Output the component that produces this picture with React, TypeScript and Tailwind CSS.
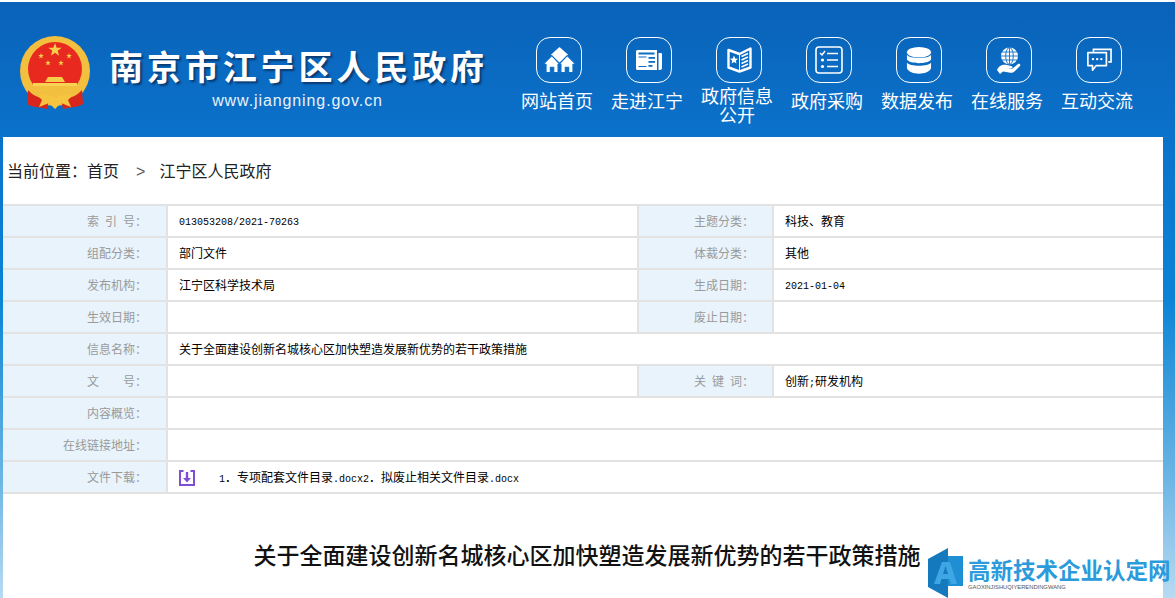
const navItems = [
  { label: "网站首页", icon: <HomeIcon />, labelClass: "mt-[10px]" },
  { label: "走进江宁", icon: <NewsIcon />, labelClass: "mt-[10px]" },
  { label: "政府信息公开", icon: <BookIcon />, labelClass: "mt-[5px]" },
  { label: "政府采购", icon: <ListIcon />, labelClass: "mt-[10px]" },
  { label: "数据发布", icon: <DbIcon />, labelClass: "mt-[10px]" },
  { label: "在线服务", icon: <GlobeIcon />, labelClass: "mt-[10px]" },
  { label: "互动交流", icon: <ChatIcon />, labelClass: "mt-[10px]" },
];

function HomeIcon() {
  return (
    <svg width="33" height="26" viewBox="0 0 34 27" fill="white">
      <path d="M17 0 L26 8 L17 16 L8 8 Z" />
      <g stroke="#0b6fc8" strokeWidth="1.2" strokeLinejoin="round">
        <path d="M9 9 L17.5 18 L15.5 18 L15.5 26.5 L11 26.5 L11 21 L7.5 21 L7.5 26.5 L3 26.5 L3 18 L0 18 Z" />
        <path d="M25 9 L34 18 L31 18 L31 26.5 L26.5 26.5 L26.5 21 L23 21 L23 26.5 L18.5 26.5 L18.5 18 L16.5 18 Z" />
      </g>
    </svg>
  );
}

function NewsIcon() {
  return (
    <svg width="26" height="20" viewBox="0 0 26 20">
      <path d="M0 1.5 A1.5 1.5 0 0 1 1.5 0 H21 V20 H1.5 A1.5 1.5 0 0 1 0 18.5 Z" fill="white" />
      <path d="M22.5 3 H25 A1 1 0 0 1 26 4 V18 A2 2 0 0 1 24 20 H22.5 Z" fill="white" />
      <rect x="2.5" y="2.5" width="16" height="2" fill="#0b6fc8" />
      <rect x="12.5" y="7" width="6.5" height="1.8" fill="#0b6fc8" />
      <rect x="12.5" y="11" width="6.5" height="1.8" fill="#0b6fc8" />
      <rect x="12.5" y="15" width="4" height="1.8" fill="#0b6fc8" />
      <path d="M2.5 6.5 H10.5 V7.5 H2.5 Z M2.5 16 H10.5 V17 H2.5 Z" fill="#0b6fc8" />
    </svg>
  );
}

function BookIcon() {
  return (
    <svg width="25" height="26" viewBox="0 0 25 26">
      <path d="M1.5 3 L12.5 7 L23.5 1.5 V20.5 L12.5 24.5 L1.5 20.5 Z" fill="none" stroke="white" strokeWidth="2.4" strokeLinejoin="round" />
      <path d="M12.5 7 V24" stroke="white" strokeWidth="1" />
      <path d="M7 8.5 L8.2 11.4 L11 11.7 L8.8 13.7 L9.5 16.5 L7 15 L4.5 16.5 L5.2 13.7 L3 11.7 L5.8 11.4 Z" fill="white" />
      <path d="M14.5 9.5 L21 6.5 M14.5 13 L21 10 M14.5 16.5 L21 13.5 M14.5 20 L21 17" stroke="white" strokeWidth="1.7" />
    </svg>
  );
}

function ListIcon() {
  return (
    <svg width="28" height="28" viewBox="0 0 28 28" fill="none" stroke="white">
      <rect x="1" y="1" width="26" height="26" rx="3" strokeWidth="1.6" />
      <path d="M5 7 L7 9 L10 5" strokeWidth="1.4" />
      <path d="M12 7.5 H23 M12 14 H23 M12 20.5 H23" strokeWidth="1.6" />
      <circle cx="7.5" cy="14" r="1.6" fill="white" stroke="none" />
      <circle cx="7.5" cy="20.5" r="1.6" fill="white" stroke="none" />
    </svg>
  );
}

function DbIcon() {
  return (
    <svg width="26" height="27" viewBox="0 0 26 28" fill="white">
      <ellipse cx="13" cy="5.5" rx="12.5" ry="5.5" />
      <path d="M0.5 8 C3 12.5 23 12.5 25.5 8 V13 C23 18 3 18 0.5 13 Z" />
      <path d="M0.5 16 C3 20.5 23 20.5 25.5 16 V22 C23 29.5 3 29.5 0.5 22 Z" />
    </svg>
  );
}

function GlobeIcon() {
  return (
    <svg width="24" height="27" viewBox="0 0 24 27">
      <circle cx="12.5" cy="9" r="8.5" fill="white" />
      <g stroke="#0b6fc8" strokeWidth="0.9" fill="none">
        <ellipse cx="12.5" cy="9" rx="3.8" ry="8.5" />
        <path d="M12.5 0.5 V17.5 M5 5 H20 M4 9 H21 M5 13 H20" />
      </g>
      <path d="M0 23 C2 18 6 17 10 18 L14 19 C16 19.5 16 21.5 14 21.5 L10 21.5 L15 22 L21 17 C22.5 16 24 17.5 23 19 L18 24 C16 26 14 26 12 25.5 L6 24.5 L3 27 Z" fill="white" />
    </svg>
  );
}

function ChatIcon() {
  return (
    <svg width="26" height="25" viewBox="0 0 28 27" fill="none" stroke="white" strokeWidth="1.8">
      <path d="M8 4 V1.5 H27 V15 H24" />
      <path d="M2 5 H22 V19 H11 L7 24 V19 H2 Z" strokeLinejoin="round" />
      <g fill="white" stroke="none">
        <circle cx="7.5" cy="12" r="1.3" />
        <circle cx="12" cy="12" r="1.3" />
        <circle cx="16.5" cy="12" r="1.3" />
      </g>
    </svg>
  );
}

function Star({ x, y, r }: { x: number; y: number; r: number }) {
  const pts = Array.from({ length: 10 }, (_, i) => {
    const a = -Math.PI / 2 + (i * Math.PI) / 5;
    const d = i % 2 === 0 ? r : r * 0.4;
    return `${x + d * Math.cos(a)},${y + d * Math.sin(a)}`;
  }).join(" ");
  return <polygon points={pts} fill="#f6cf4a" />;
}

function Emblem() {
  return (
    <svg width="72" height="76" viewBox="0 0 72 76">
      <circle cx="36" cy="35" r="35" fill="#f2bf3f" />
      <circle cx="36" cy="33" r="27" fill="#e8291f" />
      <Star x={36} y={14} r={7} />
      <Star x={22} y={20} r={3} />
      <Star x={50} y={20} r={3} />
      <Star x={29} y={27} r={3} />
      <Star x={42} y={27} r={3} />
      <path d="M29 41 H43 L46 46 H26 Z" fill="#f6cf4a" />
      <path d="M14 47 H58 V53 H14 Z" fill="#f8d253" />
      <path d="M10 53 C20 64 52 64 62 53 L60 50 H12 Z" fill="#f2bf3f" />
      <path d="M9 54 C14 60 22 63 30 63 L28 73 C22 71 14 72 8 68 Z" fill="#d9261c" />
      <path d="M63 54 C58 60 50 63 42 63 L44 73 C50 71 58 72 64 68 Z" fill="#d9261c" />
      <path d="M19 60 C25 58 31 58 36 62 C41 58 47 58 53 60 L49 64 L52 71 L42 67 L36 73 L30 67 L20 71 L23 64 Z" fill="#f6c53f" />
    </svg>
  );
}

function DownloadIcon() {
  return (
    <svg width="16" height="16" viewBox="0 0 16 16" fill="none" stroke="#7d4fd8">
      <path d="M4.5 1 H1 V15 H15 V1 H11.5" strokeWidth="2" />
      <path d="M8 2 V10" strokeWidth="2.4" />
      <path d="M4 8 H12 L8 12.5 Z" fill="#7d4fd8" stroke="none" />
    </svg>
  );
}

function Logo() {
  return (
    <svg width="36" height="50" viewBox="0 0 36 50">
      <path d="M0 11 L20 0 V50 L0 39 Z" fill="#1479bd" />
      <path d="M20 8 H35 V38 H20 Z" fill="#1f8fd4" />
      <path d="M6 36 L14 14 H22 L29 36 H23 L21.5 31 H13.5 L12 36 Z M15 26 H20 L17.5 18 Z" fill="#3ea6e4" fillRule="evenodd" />
    </svg>
  );
}

const M = ({ children }: { children: React.ReactNode }) => (
  <span className="font-['Liberation_Mono',monospace] text-[10px]">{children}</span>
);

const labelBase =
  "h-[32px] pt-[2px] flex items-center justify-end bg-[#e8f3fb] text-[#9a9a9a] text-[12px] border-b-2 border-r-2 border-[#e2e2e2] whitespace-pre";
const valueCell = "h-[32px] pt-[2px] flex items-center text-[12px] text-black pl-[11px] border-b-2 border-[#e2e2e2]";

function Row({
  a,
  b,
  c,
  d,
}: {
  a: string;
  b?: React.ReactNode;
  c?: string;
  d?: React.ReactNode;
}) {
  if (!c) {
    return (
      <div className="grid grid-cols-[165px_1fr]">
        <div className={`${labelBase} pr-[19px]`}>{a}</div>
        <div className={valueCell}>{b}</div>
      </div>
    );
  }
  return (
    <div className="grid grid-cols-[165px_471px_135px_1fr]">
      <div className={`${labelBase} pr-[19px]`}>{a}</div>
      <div className={`${valueCell} border-r-2`}>{b}</div>
      <div className={`${labelBase} pr-[18px]`}>{c}</div>
      <div className={valueCell}>{d}</div>
    </div>
  );
}

export default function App() {
  return (
    <div className="relative h-[598px] overflow-hidden font-['Liberation_Sans','Noto_Sans_CJK_SC',sans-serif] bg-[linear-gradient(to_bottom,#0a62b8_0,#0b72cb_137px,#0b84d6_300px,#6cb6e4_480px,#b8daf2_598px)]">
      <div className="h-[2px] bg-white" />
      <header className="flex h-[135px]">
        <div className="w-[512px] flex pl-[19px] pt-[34px]">
          <Emblem />
          <div className="ml-[18px] pt-[10px] flex flex-col items-center">
            <div className="text-white font-bold text-[34px] leading-[44px] tracking-[3.9px] whitespace-nowrap [text-shadow:2px_2px_2px_#0a3a70]">
              南京市江宁区人民政府
            </div>
            <div className="text-[#e8f2fb] text-[16px] leading-[20px] tracking-[0.9px] mt-[1px] ml-[-2px]">
              www.jiangning.gov.cn
            </div>
          </div>
        </div>
        <nav className="flex pt-[35px]">
          {navItems.map((item) => (
            <div key={item.label} className="w-[90px] flex flex-col items-center">
              <div className="ml-[4px] w-[46px] h-[46px] rounded-[14px] border border-white flex items-center justify-center">
                {item.icon}
              </div>
              <div className={`${item.labelClass} w-[74px] text-center text-white text-[18px] leading-[19px]`}>
                {item.label}
              </div>
            </div>
          ))}
        </nav>
      </header>

      <main className="ml-[3px] mr-[12px] h-[461px] bg-white">
        <div className="h-[67px] pt-[3px] flex items-center pl-[4px] text-[16px] text-[#222]">
          <span>当前位置：</span>
          <span>首页</span>
          <span className="ml-[17px] text-[#555]">&gt;</span>
          <span className="ml-[14px]">江宁区人民政府</span>
        </div>
        <div className="border-t-2 border-[#e2e2e2]">
          <Row a={"索\u2002引\u2002号："} b={<M>013053208/2021-70263</M>} c="主题分类：" d="科技、教育" />
          <Row a="组配分类：" b="部门文件" c="体裁分类：" d="其他" />
          <Row a="发布机构：" b="江宁区科学技术局" c="生成日期：" d={<M>2021-01-04</M>} />
          <Row a="生效日期：" c="废止日期：" />
          <Row a="信息名称：" b="关于全面建设创新名城核心区加快塑造发展新优势的若干政策措施" />
          <Row a="文　　号：" c={"关\u2002键\u2002词："} d={<span>创新<M>;</M>研发机构</span>} />
          <Row a="内容概览：" />
          <Row a="在线链接地址：" />
          <Row
            a="文件下载："
            b={
              <div className="flex items-center">
                <DownloadIcon />
                <span className="ml-[24px]">
                  <M>1</M>．专项配套文件目录<M>.docx2</M>．拟废止相关文件目录<M>.docx</M>
                </span>
              </div>
            }
          />
        </div>
        <h1 className="mt-[47px] pl-[8px] text-center text-[23px] leading-[30px] font-medium text-[#111]">
          关于全面建设创新名城核心区加快塑造发展新优势的若干政策措施
        </h1>
      </main>

      <div className="absolute left-[928px] top-[548px] flex">
        <Logo />
        <div className="ml-[4px] mt-[12px]">
          <div className="text-[22.5px] leading-[24px] font-bold text-[#2c9bdc] whitespace-nowrap">高新技术企业认定网</div>
          <div className="text-[5.8px] leading-[7px] text-[#555] whitespace-nowrap">GAOXINJISHUQIYERENDINGWANG</div>
        </div>
      </div>
    </div>
  );
}
